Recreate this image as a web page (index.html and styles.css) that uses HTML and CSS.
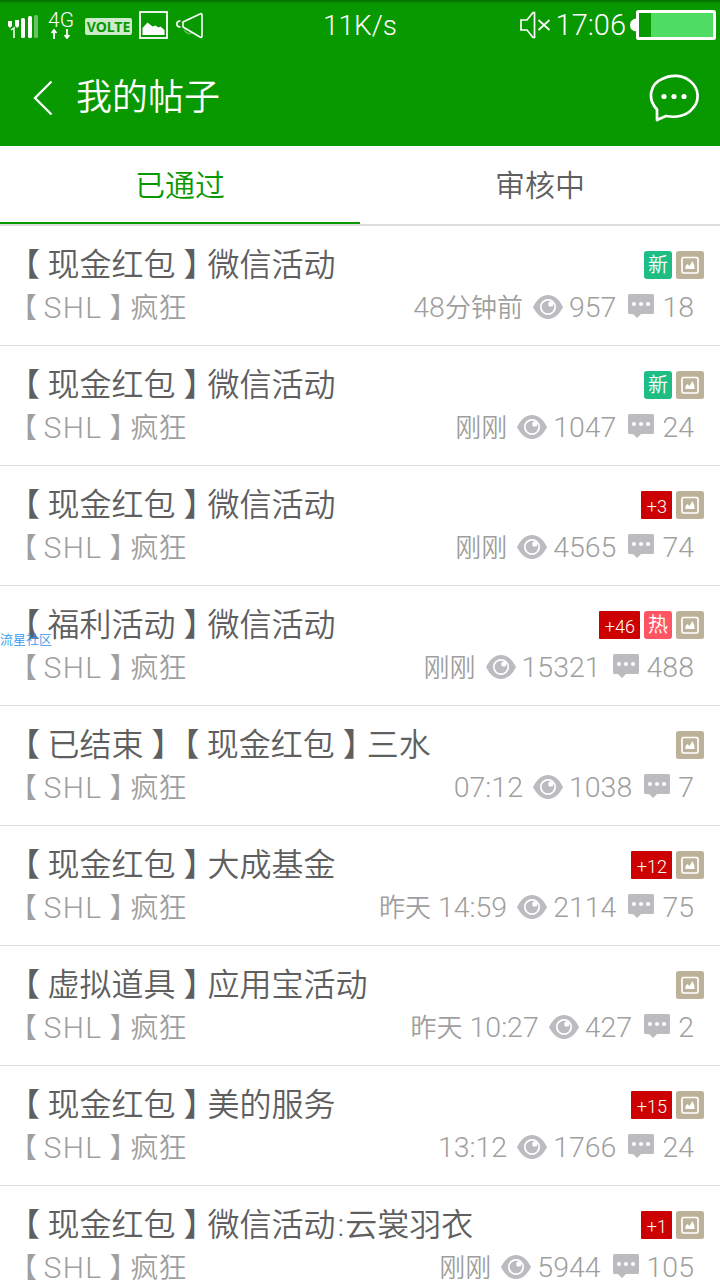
FILE: index.html
```html
<!DOCTYPE html>
<html lang="zh-CN">
<head>
    <meta charset="UTF-8">
    <meta name="viewport" content="width=device-width, initial-scale=1.0">
    <title>我的帖子</title>
    <link rel="stylesheet" href="styles.css">
</head>
<body>
    <svg class="symbols" width="0" height="0">
        <symbol id="eye" viewBox="0 0 30 24">
            <path d="M0 12C4 4 9 0 15 0s11 4 15 12c-4 8-9 12-15 12S4 20 0 12z" fill="#bcbcc0"/>
            <circle cx="15" cy="12" r="7.2" fill="#bcbcc0" stroke="#fff" stroke-width="1.7"/>
            <circle cx="17.8" cy="9" r="2.6" fill="#fff"/>
        </symbol>
        <symbol id="comment" viewBox="0 0 26 24">
            <path d="M1.5 0h23A1.5 1.5 0 0 1 26 1.5v17a1.5 1.5 0 0 1-1.5 1.5H13l-4 4-4-4H1.5A1.5 1.5 0 0 1 0 18.5v-17A1.5 1.5 0 0 1 1.5 0z" fill="#bcbcc0"/>
            <circle cx="6" cy="10" r="2.1" fill="#fff"/>
            <circle cx="13" cy="10" r="2.1" fill="#fff"/>
            <circle cx="20" cy="10" r="2.1" fill="#fff"/>
        </symbol>
        <symbol id="pic" viewBox="0 0 28 28">
            <rect width="28" height="28" rx="2.5" fill="#bcb199"/>
            <rect x="6" y="6.5" width="16" height="15.5" rx="1.5" fill="none" stroke="#fff" stroke-width="1.7"/>
            <path d="M9.5 18v-3l2-2 2 2 3-5 2 5V18z" fill="#fff"/>
        </symbol>
    </svg>

    <div class="status-bar">
        <div class="status-left">
            <svg class="signal" width="30" height="26" viewBox="0 0 30 26" fill="#fff">
                <path d="M0 9h4v5l-2 2-2-2zM7 8h4v6l-2 2-2-2z"/>
                <path d="M3 18l3-2v10" fill="none" stroke="#fff" stroke-width="1.5"/>
                <rect x="13" y="6" width="4" height="20" rx="1.5"/>
                <rect x="20" y="4" width="4" height="22" rx="1.5"/>
                <rect x="26" y="3" width="4" height="23" rx="1.5" opacity=".4"/>
            </svg>
            <div class="network">
                <span>4G</span>
                <svg width="22" height="10" viewBox="0 0 22 10" fill="none" stroke="#fff" stroke-width="1.8">
                    <path d="M4 10V1M1.5 4L4 1l2.5 3M17 0v9M14.5 6l2.5 3 2.5-3"/>
                </svg>
            </div>
            <span class="volte">VOLTE</span>
            <svg class="gallery" width="29" height="28" viewBox="0 0 29 28">
                <rect x="1" y="1" width="27" height="26" fill="none" stroke="#fff" stroke-width="1.8"/>
                <path d="M3.5 24v-7l5-5.500 5 4 3-1 3 2 2-1 4 3.500v5z" fill="#fff"/>
            </svg>
            <svg class="horn" width="27" height="27" viewBox="0 0 27 27" fill="none" stroke="#fff" stroke-width="1.6">
                <path d="M7 10L24 2q2-1 2 1v21q0 2-2 1L7 15zM4.5 9H3l-2 1.5v3L3 15h1.5"/>
                <path d="M8 18q5 6 8 2" opacity=".35"/>
            </svg>
        </div>
        <span class="speed">11K/s</span>
        <div class="status-right">
            <svg width="31" height="28" viewBox="0 0 31 28" fill="none" stroke="#fff" stroke-width="1.7">
                <path d="M1 9h6l6-7.5h1.5v25H13L7 19H1zM18.5 9l11 10M29.5 9l-11 10"/>
            </svg>
            <span class="clock">17:06</span>
            <svg width="86" height="30" viewBox="0 0 86 30">
                <path d="M7 8.5Q0 9 0 15t7 6.5z" fill="#fff"/>
                <rect x="7.5" y="1.5" width="77" height="27" rx="1" fill="#089800" stroke="#fff" stroke-width="3"/>
                <rect x="21" y="3" width="62" height="24" fill="#4fdc65"/>
            </svg>
        </div>
    </div>

    <div class="header">
        <svg class="back" width="20" height="36" viewBox="0 0 20 36" fill="none" stroke="#fff" stroke-width="2.3">
            <path d="M18.5 1.5L2 18l16.5 16.5"/>
        </svg>
        <h1>我的帖子</h1>
        <svg class="message" width="50" height="48" viewBox="0 0 50 48">
            <path d="M8 35.500C-2 25 1 10 13 5c9-5 21-4 28 2 9 7 10 19 3 27-6 8-17 10-27 8l-9 4z" fill="none" stroke="#fff" stroke-width="2.7" stroke-linejoin="round"/>
            <circle cx="15" cy="22.5" r="2.6" fill="#fff"/>
            <circle cx="25" cy="22.5" r="2.6" fill="#fff"/>
            <circle cx="35" cy="22.5" r="2.6" fill="#fff"/>
        </svg>
    </div>

    <div class="tabs">
        <div class="tab active">已通过</div>
        <div class="tab">审核中</div>
    </div>

    <div class="list">
        <div class="post">
            <div class="line">
                <div class="title"><i>【</i>现金红包<b>】</b>微信活动</div>
                <span class="badge new">新</span>
                <svg class="pic"><use href="#pic"/></svg>
            </div>
            <div class="line info">
                <div class="author"><i>【</i><em>SHL</em><b>】</b>疯狂</div>
                <span class="time">48<small>分钟前</small></span>
                <svg class="eye"><use href="#eye"/></svg><span class="views">957</span>
                <svg class="comment"><use href="#comment"/></svg><span>18</span>
            </div>
        </div>
        <div class="post">
            <div class="line">
                <div class="title"><i>【</i>现金红包<b>】</b>微信活动</div>
                <span class="badge new">新</span>
                <svg class="pic"><use href="#pic"/></svg>
            </div>
            <div class="line info">
                <div class="author"><i>【</i><em>SHL</em><b>】</b>疯狂</div>
                <span class="time"><small>刚刚</small></span>
                <svg class="eye"><use href="#eye"/></svg><span class="views">1047</span>
                <svg class="comment"><use href="#comment"/></svg><span>24</span>
            </div>
        </div>
        <div class="post">
            <div class="line">
                <div class="title"><i>【</i>现金红包<b>】</b>微信活动</div>
                <span class="badge plus">+3</span>
                <svg class="pic"><use href="#pic"/></svg>
            </div>
            <div class="line info">
                <div class="author"><i>【</i><em>SHL</em><b>】</b>疯狂</div>
                <span class="time"><small>刚刚</small></span>
                <svg class="eye"><use href="#eye"/></svg><span class="views">4565</span>
                <svg class="comment"><use href="#comment"/></svg><span>74</span>
            </div>
        </div>
        <div class="post">
            <div class="line">
                <div class="title"><i>【</i>福利活动<b>】</b>微信活动</div>
                <span class="badge plus">+46</span>
                <span class="badge hot">热</span>
                <svg class="pic"><use href="#pic"/></svg>
            </div>
            <div class="line info">
                <div class="author"><i>【</i><em>SHL</em><b>】</b>疯狂</div>
                <span class="time"><small>刚刚</small></span>
                <svg class="eye"><use href="#eye"/></svg><span class="views">15321</span>
                <svg class="comment"><use href="#comment"/></svg><span>488</span>
            </div>
            <span class="watermark">流星社区</span>
        </div>
        <div class="post">
            <div class="line">
                <div class="title"><i>【</i>已结束<b>】</b><i>【</i>现金红包<b>】</b>三水</div>
                <svg class="pic"><use href="#pic"/></svg>
            </div>
            <div class="line info">
                <div class="author"><i>【</i><em>SHL</em><b>】</b>疯狂</div>
                <span class="time">07:12</span>
                <svg class="eye"><use href="#eye"/></svg><span class="views">1038</span>
                <svg class="comment"><use href="#comment"/></svg><span>7</span>
            </div>
        </div>
        <div class="post">
            <div class="line">
                <div class="title"><i>【</i>现金红包<b>】</b>大成基金</div>
                <span class="badge plus">+12</span>
                <svg class="pic"><use href="#pic"/></svg>
            </div>
            <div class="line info">
                <div class="author"><i>【</i><em>SHL</em><b>】</b>疯狂</div>
                <span class="time"><small>昨天</small> 14:59</span>
                <svg class="eye"><use href="#eye"/></svg><span class="views">2114</span>
                <svg class="comment"><use href="#comment"/></svg><span>75</span>
            </div>
        </div>
        <div class="post">
            <div class="line">
                <div class="title"><i>【</i>虚拟道具<b>】</b>应用宝活动</div>
                <svg class="pic"><use href="#pic"/></svg>
            </div>
            <div class="line info">
                <div class="author"><i>【</i><em>SHL</em><b>】</b>疯狂</div>
                <span class="time"><small>昨天</small> 10:27</span>
                <svg class="eye"><use href="#eye"/></svg><span class="views">427</span>
                <svg class="comment"><use href="#comment"/></svg><span>2</span>
            </div>
        </div>
        <div class="post">
            <div class="line">
                <div class="title"><i>【</i>现金红包<b>】</b>美的服务</div>
                <span class="badge plus">+15</span>
                <svg class="pic"><use href="#pic"/></svg>
            </div>
            <div class="line info">
                <div class="author"><i>【</i><em>SHL</em><b>】</b>疯狂</div>
                <span class="time">13:12</span>
                <svg class="eye"><use href="#eye"/></svg><span class="views">1766</span>
                <svg class="comment"><use href="#comment"/></svg><span>24</span>
            </div>
        </div>
        <div class="post">
            <div class="line">
                <div class="title"><i>【</i>现金红包<b>】</b>微信活动<em>:</em>云裳羽衣</div>
                <span class="badge plus">+1</span>
                <svg class="pic"><use href="#pic"/></svg>
            </div>
            <div class="line info">
                <div class="author"><i>【</i><em>SHL</em><b>】</b>疯狂</div>
                <span class="time"><small>刚刚</small></span>
                <svg class="eye"><use href="#eye"/></svg><span class="views">5944</span>
                <svg class="comment"><use href="#comment"/></svg><span>105</span>
            </div>
        </div>
    </div>
</body>
</html>
```

FILE: styles.css
```css
body {
    margin: 0;
    width: 720px;
    height: 1280px;
    overflow: hidden;
    display: flex;
    flex-direction: column;
    background: #fff;
    font-family: Roboto, "Noto Sans CJK SC DemiLight", "Noto Sans CJK SC", sans-serif;
    font-weight: 350;
}
svg {
    flex-shrink: 0;
}
.symbols {
    display: none;
}
i, b, em {
    font-style: normal;
    font-weight: inherit;
}
.status-bar {
    height: 50px;
    flex-shrink: 0;
    display: grid;
    grid-template-columns: 1fr auto 1fr;
    align-items: center;
    background: linear-gradient(#067000, #089800 4px);
    color: #fff;
}
.status-left, .status-right {
    display: flex;
    align-items: center;
}
.status-left {
    padding-left: 8px;
}
.status-right {
    justify-content: flex-end;
    padding-right: 4px;
}
.network {
    display: flex;
    flex-direction: column;
    align-items: center;
    width: 28px;
    margin-left: 9px;
    font-size: 21px;
    line-height: 18px;
}
.volte {
    width: 47px;
    height: 17px;
    margin: 3px 7px 0 10px;
    border-radius: 2px;
    background: #cdeacb;
    color: #089800;
    font: bold 14px/17px "Noto Sans", sans-serif;
    text-align: center;
}
.horn {
    margin-left: 8px;
}
.speed {
    font-size: 28px;
}
.clock {
    margin: 0 4px 0 5px;
    font-size: 29px;
}
.header {
    height: 96px;
    flex-shrink: 0;
    display: flex;
    align-items: center;
    padding: 0 21px 0 33px;
    background: #089800;
    color: #fff;
}
.header h1 {
    flex: 1;
    margin: 0 0 0 23px;
    font-size: 36px;
    font-weight: inherit;
    line-height: 48px;
}
.tabs {
    display: flex;
    height: 78px;
    flex-shrink: 0;
    border-bottom: 2px solid #ddd;
}
.tab {
    flex: 1;
    box-sizing: border-box;
    font-size: 30px;
    line-height: 80px;
    text-align: center;
    color: #5f5f5f;
}
.tab.active {
    color: #089800;
    border-bottom: 2px solid #089800;
}
.post {
    position: relative;
    box-sizing: border-box;
    height: 120px;
    padding: 18px 16px 0;
    border-bottom: 1px solid #ddd;
}
.line {
    display: flex;
    align-items: center;
    height: 42px;
    line-height: 42px;
    white-space: nowrap;
}
.title {
    flex: 1;
    font-size: 32px;
    color: #5f5f5f;
}
.title em {
    padding: 0 1px 0 2px;
}
/* half-width brackets, centred in a full cell */
.line i, .line b {
    font-feature-settings: "halt";
}
.line i {
    padding: 0 .23em 0 .25em;
}
.line b {
    padding: 0 .25em 0 .25em;
}
.info {
    padding-right: 10px;
    font-size: 28.5px;
    color: #9f9f9f;
}
.info span {
    padding-top: 2px;
}
.info small {
    font-size: 26px;
    line-height: 0;
}
.info .author {
    flex: 1;
    padding-top: 4px;
    font-size: 28px;
}
.author em {
    font-size: 30px;
    line-height: 0;
    letter-spacing: 1.4px;
}
.badge, .pic {
    width: 28px;
    height: 28px;
    margin-left: 4px;
}
.badge {
    border-radius: 3px;
    color: #fff;
    font-size: 20px;
    font-weight: 500;
    line-height: 28px;
    text-align: center;
}
.badge.new {
    background: #1ebd83;
}
.badge.hot {
    background: #ff5563;
}
.badge.plus {
    width: auto;
    padding: 0 5px 0 6px;
    border-radius: 1px;
    background: #c00;
    font-size: 18px;
    font-weight: 350;
    line-height: 31px;
}
.eye {
    width: 30px;
    height: 24px;
    margin: 0 6px 0 10px;
}
.comment {
    width: 26px;
    height: 24px;
    margin: 0 8px 2px 12px;
}
.watermark {
    position: absolute;
    left: 0;
    top: 46px;
    font-size: 13px;
    line-height: 16px;
    color: #3399ee;
}
```
